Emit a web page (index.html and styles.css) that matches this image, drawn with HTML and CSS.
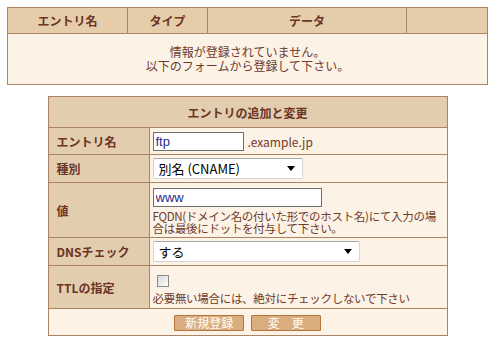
FILE: index.html
```html
<!DOCTYPE html>
<html lang="ja">
<head>
  <meta charset="UTF-8">
  <title>DNS設定</title>
  <link rel="stylesheet" href="styles.css">
</head>
<body>
  <table class="list">
    <tr>
      <th class="c-name">エントリ名</th>
      <th class="c-type">タイプ</th>
      <th class="c-data">データ</th>
      <th class="c-op"></th>
    </tr>
    <tr>
      <td colspan="4" class="empty">
        <div class="msg">情報が登録されていません。</div>
        <div class="msg">以下のフォームから登録して下さい。</div>
      </td>
    </tr>
  </table>

  <table class="form">
    <tr class="r-title">
      <th colspan="2">エントリの追加と変更</th>
    </tr>
    <tr class="r-entry">
      <th>エントリ名</th>
      <td><input type="text" class="in-entry" value="ftp"><span class="domain">.example.jp</span></td>
    </tr>
    <tr class="r-type">
      <th>種別</th>
      <td><span class="sel sel-type"><select><option>別名 (CNAME)</option></select></span></td>
    </tr>
    <tr class="r-value">
      <th>値</th>
      <td>
        <input type="text" class="in-value" value="www">
        <div class="note">FQDN(ドメイン名の付いた形でのホスト名)にて入力の場</div>
        <div class="note">合は最後にドットを付与して下さい。</div>
      </td>
    </tr>
    <tr class="r-dns">
      <th>DNSチェック</th>
      <td><span class="sel sel-dns"><select><option>する</option></select></span></td>
    </tr>
    <tr class="r-ttl">
      <th>TTLの指定</th>
      <td>
        <input type="checkbox" class="chk">
        <div class="note">必要無い場合には、絶対にチェックしないで下さい</div>
      </td>
    </tr>
    <tr class="r-btn">
      <td colspan="2">
        <button class="btn">新規登録</button>
        <button class="btn">変　更</button>
      </td>
    </tr>
  </table>
</body>
</html>
```

FILE: styles.css
```css
body {
  margin: 0;
  padding: 7px 0 0;
  background: #ffffff;
  font-family: "Noto Sans CJK JP", "Liberation Sans", sans-serif;
  font-size: 12px;
  color: #6e3b2b;
}
table {
  border-collapse: collapse;
  margin: 0 auto;
}
th, td {
  border: 1px solid #ab8466;
  padding: 0;
}
th {
  font-weight: bold;
  color: #6b3426;
}

.list {
  width: 481px;
  margin-left: 7px;
}
.list th {
  background: #e6cdaa;
  height: 25px;
}
.c-name { width: 119px; }
.c-type { width: 79px; }
.c-data { width: 198px; }
.list .empty {
  background: #fdf2e6;
  height: 50px;
  text-align: center;
}
.msg {
  height: 14px;
  line-height: 14px;
}

.form {
  width: 400px;
  margin-top: 11px;
}
.form th {
  background: #e3cdaf;
  text-align: left;
  padding-left: 8px;
  width: 92px;
}
.form td {
  background: #fdf2e6;
  padding-left: 3px;
}
.form .r-title th {
  text-align: center;
  padding-left: 0;
  height: 30px;
}
.r-entry th { height: 26px; }
.r-type th { height: 27px; }
.r-value th { height: 54px; }
.r-dns th { height: 27px; }
.r-ttl th { height: 42px; }
.r-btn td {
  height: 26px;
  text-align: center;
  padding: 0;
}

input[type="text"] {
  box-sizing: border-box;
  height: 19px;
  border: 1px solid #6f6f6f;
  padding: 0 2px;
  font-family: "Liberation Sans", sans-serif;
  font-size: 13px;
  color: #1f2a8a;
  vertical-align: middle;
  margin: 0;
}
.in-entry { width: 91px; color: #202020; }
.in-value {
  width: 169px;
  display: block;
  margin-top: 2px !important;
}
.domain {
  margin-left: 4px;
  vertical-align: middle;
}
.note {
  height: 12px;
  line-height: 12px;
  font-size: 11.5px;
  letter-spacing: -0.3px;
  white-space: nowrap;
}
.r-value .in-value + .note { margin-top: 3px; }

.sel {
  position: relative;
  display: inline-block;
  vertical-align: middle;
}
.sel select {
  appearance: none;
  box-sizing: border-box;
  height: 21px;
  border: 1px solid #d5d5d5;
  border-top-color: #a9a9a9;
  border-radius: 2px;
  background: #ffffff;
  padding: 0 0 0 5px;
  font-family: "Noto Sans CJK JP", "Liberation Sans", sans-serif;
  font-size: 13px;
  color: #000000;
  width: 100%;
}
.sel::after {
  content: "";
  position: absolute;
  right: 8px;
  top: 8px;
  border-left: 4px solid transparent;
  border-right: 4px solid transparent;
  border-top: 5px solid #000000;
  pointer-events: none;
}
.sel-type { width: 150px; }
.sel-dns { width: 207px; }

.chk {
  appearance: none;
  display: block;
  width: 12px;
  height: 12px;
  margin: 4px 0 0 4px;
  border: 1px solid #8b8b8b;
  background: linear-gradient(135deg, #d8d8d8, #ffffff);
}
.r-ttl .note { margin-top: 5px; }

.btn {
  box-sizing: border-box;
  width: 70px;
  height: 16px;
  margin: 0 2px;
  padding: 0;
  border: 1px solid #b6773f;
  border-radius: 1px;
  background: #d9ad7e;
  color: #ffffff;
  font-family: "Noto Sans CJK JP", sans-serif;
  font-size: 12px;
  line-height: 14px;
  vertical-align: middle;
}
```
